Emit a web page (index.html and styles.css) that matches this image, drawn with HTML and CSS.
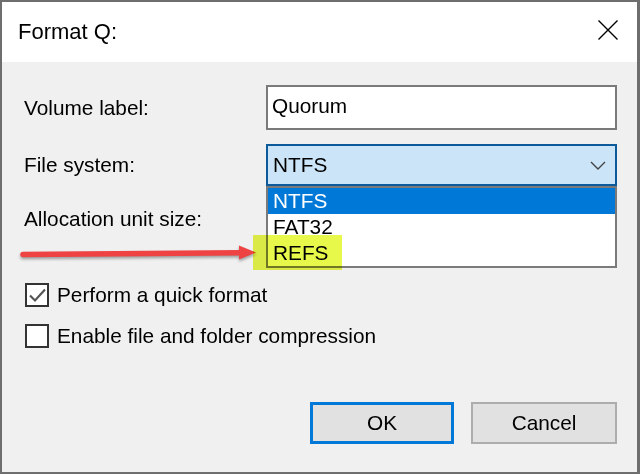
FILE: index.html
```html
<!DOCTYPE html>
<html>
<head>
<meta charset="utf-8">
<link rel="stylesheet" href="styles.css">
</head>
<body>
<div class="window">
  <div class="titlebar">
    <span class="title">Format Q:</span>
    <svg class="close" width="20" height="20" viewBox="0 0 20 20"><path d="M0.5 0.5 L19.5 19.5 M19.5 0.5 L0.5 19.5" stroke="#000" stroke-width="1.4" fill="none"/></svg>
  </div>
  <div class="content">
    <div class="row r1">
      <span class="lbl">Volume label:</span>
      <div class="input">Quorum</div>
    </div>
    <div class="row r2">
      <span class="lbl">File system:</span>
      <div class="combo-wrap">
        <div class="combo">
          <span>NTFS</span>
          <svg class="chev" width="16" height="9" viewBox="0 0 16 9"><path d="M1 1 L8 8 L15 1" stroke="#444" stroke-width="1.4" fill="none"/></svg>
        </div>
        <ul class="dropdown">
          <li class="sel">NTFS</li>
          <li>FAT32</li>
          <li>REFS</li>
        </ul>
      </div>
    </div>
    <div class="row r3">
      <span class="lbl">Allocation unit size:</span>
    </div>
    <div class="check c1">
      <span class="box"><svg width="20" height="20" viewBox="0 0 20 20"><path d="M3 10.5 L8 15.5 L18 4.5" stroke="#555" stroke-width="2.2" fill="none"/></svg></span>
      <span>Perform a quick format</span>
    </div>
    <div class="check c2">
      <span class="box"></span>
      <span>Enable file and folder compression</span>
    </div>
    <div class="buttons">
      <button class="btn ok">OK</button>
      <button class="btn">Cancel</button>
    </div>
  </div>
  <svg class="arrow" width="244" height="26" viewBox="0 0 244 26"><path d="M5 12.5 L224 10.8" stroke="#ef4242" stroke-width="5.5" stroke-linecap="round" fill="none"/><polygon points="238,10.5 221,3.5 221,17.5" fill="#ef4242"/></svg>
  <div class="highlight"></div>
</div>
</body>
</html>
```

FILE: styles.css
```css
* { box-sizing: border-box; }
html, body { margin: 0; padding: 0; }
body {
  width: 640px;
  height: 474px;
  overflow: hidden;
  font-family: "Liberation Sans", Arial, sans-serif;
  font-size: 20.8px;
  color: #000;
}
.window {
  position: relative;
  width: 640px;
  height: 474px;
  border: 2px solid #6e6e6e;
  border-right-width: 3px;
  display: flex;
  flex-direction: column;
  background: #f0f0f0;
}
.titlebar {
  height: 60px;
  background: #fff;
  display: flex;
  align-items: center;
  justify-content: space-between;
  padding: 0 19px 0 16px;
}
.title { font-size: 22px; }
.close { margin-bottom: 5px; }
.content {
  flex: 1;
  display: flex;
  flex-direction: column;
  padding: 23px 20px 28px 22px;
}
.row {
  display: grid;
  grid-template-columns: 242px 351px;
  align-items: center;
}
.r1 { height: 45px; margin-bottom: 14px; }
.r2 { height: 42px; margin-bottom: 12px; }
.r3 { height: 42px; margin-bottom: 42px; }
.input {
  height: 45px;
  background: #fff;
  border: 2px solid #7a7a7a;
  padding-left: 4px;
  display: flex;
  align-items: center;
  padding-bottom: 4px;
}
.combo-wrap { position: relative; height: 42px; }
.combo {
  height: 42px;
  background: #cce4f7;
  border: 2px solid #0c5a9a;
  display: flex;
  align-items: center;
  justify-content: space-between;
  padding: 0 9px 0 5px;
}
.chev { margin-top: 1px; }
.dropdown {
  position: absolute;
  top: 100%;
  left: 0;
  width: 100%;
  margin: 0;
  padding: 0;
  list-style: none;
  background: #fff;
  border: 2px solid #7a7a7a;
  z-index: 2;
}
.dropdown li {
  height: 26px;
  line-height: 26px;
  padding-left: 5px;
}
.dropdown li.sel { background: #0078d7; color: #fff; }
.check {
  display: flex;
  align-items: center;
  height: 26px;
  padding-left: 1px;
}
.c1 { margin-bottom: 15px; }
.box {
  width: 24px;
  height: 24px;
  border: 2px solid #333;
  background: #fff;
  margin-right: 8px;
  display: flex;
  align-items: center;
  justify-content: center;
}
.buttons {
  margin-top: auto;
  display: flex;
  justify-content: flex-end;
  gap: 17px;
}
.btn {
  width: 146px;
  height: 42px;
  background: #e1e1e1;
  border: 2px solid #adadad;
  font-family: inherit;
  font-size: 20.8px;
  color: #000;
  padding: 0;
}
.btn.ok { border: 3px solid #0078d7; width: 144px; }
.arrow {
  position: absolute;
  left: 16px;
  top: 240px;
  filter: drop-shadow(0 2px 1.5px rgba(0,0,0,0.35));
  z-index: 3;
}
.highlight {
  position: absolute;
  left: 251px;
  top: 233px;
  width: 89px;
  height: 35px;
  background: #e8f84a;
  mix-blend-mode: multiply;
  z-index: 4;
}
```
